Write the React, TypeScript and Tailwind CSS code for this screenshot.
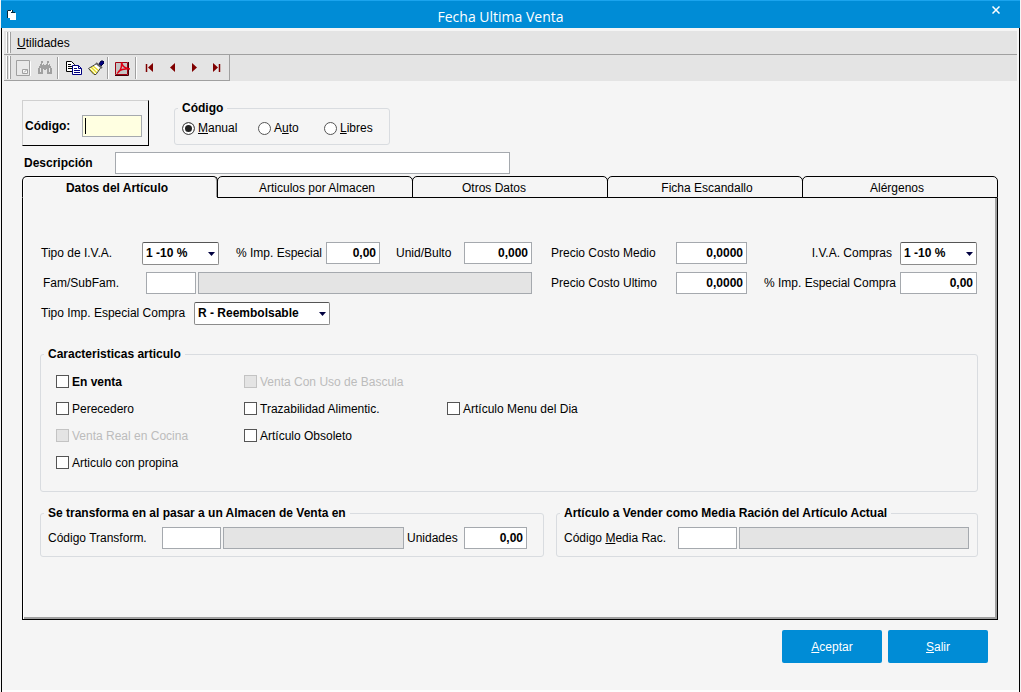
import { useState, type ReactNode } from "react";
import clsx from "clsx";

const TABS = [
  { name: "Datos del Artículo", pad: "pr-1.5" },
  { name: "Articulos por Almacen", pad: "pl-1" },
  { name: "Otros Datos", pad: "pr-8" },
  { name: "Ficha Escandallo", pad: "pl-1" },
  { name: "Alérgenos", pad: "pr-1.5" },
];

const CODE_MODES = [
  { id: "manual", key: "M", before: "", after: "anual", width: "w-[76px]" },
  { id: "auto", key: "u", before: "A", after: "to", width: "w-[66px]" },
  { id: "libres", key: "L", before: "", after: "ibres", width: "" },
];

interface TextFieldProps {
  id: string;
  label?: string;
  value?: string;
  readOnly?: boolean;
  className?: string;
}

function TextField({ id, label, value = "", readOnly, className }: TextFieldProps) {
  return (
    <input
      id={id}
      type="text"
      aria-label={label}
      defaultValue={value}
      readOnly={readOnly}
      className={clsx(
        "h-[22px] min-w-0 border border-[#a5a9ae] px-[3px] text-right font-bold outline-none",
        readOnly ? "bg-[#e4e4e4]" : "bg-white",
        className
      )}
    />
  );
}

interface SelectFieldProps {
  id: string;
  options: string[];
  className?: string;
}

function SelectField({ id, options, className }: SelectFieldProps) {
  return (
    <div className={clsx("relative shrink-0", className)}>
      <select
        id={id}
        className="block h-[23px] w-full appearance-none rounded-[2px] border border-[#8c8c8c] border-t-[#555] bg-white pl-[3px] font-bold outline-none"
      >
        {options.map((o) => (
          <option key={o}>{o}</option>
        ))}
      </select>
      <svg className="pointer-events-none absolute top-[10px] right-1 h-1 w-[7px]" viewBox="0 0 7 4" fill="#000040">
        <path d="M0 0h7L3.5 4z" />
      </svg>
    </div>
  );
}

interface GroupProps {
  title: string;
  className?: string;
  children: ReactNode;
}

function Group({ title, className, children }: GroupProps) {
  return (
    <fieldset className={clsx("min-w-0 rounded-[3px] border border-[#d9dce0] pl-[3px]", className)}>
      <legend className="px-1 leading-4 font-bold">{title}</legend>
      {children}
    </fieldset>
  );
}

interface CheckProps {
  label: string;
  bold?: boolean;
  disabled?: boolean;
}

function Check({ label, bold, disabled }: CheckProps) {
  return (
    <label className={clsx("flex h-[27px] items-center gap-[3px]", bold && "font-bold", disabled && "text-[#bcbcbc]")}>
      <input
        type="checkbox"
        disabled={disabled}
        className="size-[13px] appearance-none border border-[#555] bg-white checked:bg-[#444] disabled:border-[#c3c3c3] disabled:bg-[#e4e4e4]"
      />
      {label}
    </label>
  );
}

function Grip() {
  return (
    <span className="flex gap-px self-stretch py-px pl-0.5">
      <span className="w-0.5 border-r border-[#a0a0a0] bg-white" />
      <span className="w-0.5 border-r border-[#a0a0a0] bg-white" />
    </span>
  );
}

function Separator() {
  return <span className="h-[22px] w-0.5 border-l border-[#a0a0a0] bg-white" />;
}

interface ToolButtonProps {
  title: string;
  disabled?: boolean;
  children: ReactNode;
}

function ToolButton({ title, disabled, children }: ToolButtonProps) {
  return (
    <button title={title} disabled={disabled} className="flex h-[22px] w-[22px] items-center justify-center">
      <svg className="size-4" viewBox="0 0 16 16" fill="none">
        {children}
      </svg>
    </button>
  );
}

export default function App() {
  const [mode, setMode] = useState("manual");
  const [tab, setTab] = useState(0);

  return (
    <div className="flex min-h-screen flex-col bg-[#f5f5f5] px-px font-['Liberation_Sans',Arial,sans-serif] text-xs text-black">
      <header className="relative flex h-7 items-center justify-center border-t border-[#1ba4ee] bg-[#008cd6] pt-1 pr-5">
        <svg className="absolute top-2 left-1.5 h-3 w-3" viewBox="0 0 12 12">
          <path d="M0 1h5v8H0z" fill="#fff" />
          <path d="M3 4h6v7H3z" fill="#fff" />
          <path d="M.5 9V1.500H4M5.500 1v2.500H8" fill="none" stroke="#05293d" />
          <path d="M4 3h2v1H4z" fill="#05293d" />
        </svg>
        <h1 className="font-['Open_Sans','Noto_Sans',sans-serif] text-sm text-white">Fecha Ultima Venta</h1>
        <button title="Cerrar" className="absolute top-[3px] right-[18px] p-0.5">
          <svg className="size-2" viewBox="0 0 8 8" stroke="#fff" strokeWidth="1.500">
            <path d="M.5 .5l7 7M7.500 .5l-7 7" />
          </svg>
        </button>
      </header>

      <div className="flex flex-1 flex-col border-x border-black">
        <nav className="mx-0.5 mt-[3px] flex h-6 items-center border-b border-[#a0a0a0] bg-[#e4e4e4]">
          <Grip />
          <button className="px-1.5">
            <span className="underline">U</span>tilidades
          </button>
        </nav>

        <div className="mx-0.5 flex h-[26px] bg-[#e4e4e4]">
          <div className="flex items-center border-r border-b border-[#a0a0a0] pr-0.5">
            <Grip />
            <span className="w-px" />
            <ToolButton title="Nuevo" disabled>
              <path d="M2.500 1.500h13v15h-13z" stroke="#fff" />
              <path d="M1.500 .5h13v15h-13z" fill="#e9e9e9" stroke="#a0a0a0" />
              <path d="M7.500 9.500h5v4h-5z" fill="#f8f8f8" stroke="#a0a0a0" />
              <path d="M9 12.500l3-3" stroke="#a0a0a0" />
            </ToolButton>
            <ToolButton title="Buscar" disabled>
              <path
                d="M4 1h2v3h1v1h2V4h1V1h2v3h1v2h1v2h1v6h-5V9H9v1H7V9H6v5H1V8h1V6h1V4h1z"
                fill="#a0a0a0"
              />
              <path d="M5.500 3v2M3.500 8v4M11.500 3v2M12.500 8v4" stroke="#e8e8e8" />
            </ToolButton>
            <span className="w-px" />
            <Separator />
            <span className="w-1" />
            <ToolButton title="Copiar">
              <path d="M.5 1.500h5l3 3v7h-8z" fill="#fff" stroke="#000" />
              <path d="M2 4.500h3M2 6.500h4M2 8.500h4" stroke="#000" />
              <path d="M6.500 5.500h6l3 3v6h-9z" fill="#fff" stroke="#000080" />
              <path d="M12.500 5.500v3h3M8 8.500h3M8 10.500h6M8 12.500h6" stroke="#000080" />
            </ToolButton>
            <ToolButton title="Limpiar">
              <path d="M11 4l2-3h2l1 1v1l-3 3z" fill="#000080" stroke="#000040" />
              <path d="M.5 8.500L9 3l4 4-5 8H6z" fill="#fff" />
              <path d="M3 7l6 6M5 6l6 5M1.500 9l5 5" stroke="#e8dc20" strokeWidth="1.500" />
              <path d="M.5 8.500L8 4M12.500 8L8 14.500H6L.5 8.500" stroke="#444" />
              <path d="M8 3l6 5" stroke="#606060" strokeWidth="2" />
            </ToolButton>
            <Separator />
            <span className="w-0.5" />
            <ToolButton title="Exportar a PDF">
              <path d="M1.500 2.500h12v12h-12z" fill="#c4c4c4" stroke="#a00010" />
              <path d="M1 15.500h13.500V2" stroke="#400008" />
              <path d="M3 13.500c3-2 5-6 4.500-11 1 4 3 6 8.500 6.500-5-.5-9 .5-12 2.500" stroke="#e00014" strokeWidth="1.500" />
            </ToolButton>
            <span className="w-0.5" />
            <Separator />
            <span className="w-0.5" />
            <ToolButton title="Primero">
              <path d="M4.500 4v8" stroke="#800000" strokeWidth="1.500" />
              <path d="M11 3v9L6 7.500z" fill="#800000" />
            </ToolButton>
            <ToolButton title="Anterior">
              <path d="M11 3v9L6 7.500z" fill="#800000" />
            </ToolButton>
            <ToolButton title="Siguiente">
              <path d="M6 3v9l5-4.500z" fill="#800000" />
            </ToolButton>
            <ToolButton title="Último">
              <path d="M11.500 4v8" stroke="#800000" strokeWidth="1.500" />
              <path d="M5 3v9l5-4.500z" fill="#800000" />
            </ToolButton>
          </div>
        </div>

        <main className="flex flex-1 flex-col border-b-2 border-[#fdfdfd] pt-[19px] pr-[21px] pl-5">
          <div className="flex items-start gap-[25px]">
            <div className="flex h-[46px] w-[127px] items-center justify-between border border-t-[#d0d0d0] border-r-black border-b-black border-l-[#d0d0d0] pt-1.5 pr-1.5 pl-0.5">
              <label htmlFor="codigo" className="font-bold">
                Código:
              </label>
              <div className="relative">
                <input
                  id="codigo"
                  type="text"
                  className="peer block h-[22px] w-[60px] border border-[#a5a9ae] bg-[#ffffe1] px-[3px] outline-none"
                />
                <span className="pointer-events-none absolute top-[3px] left-[3px] h-4 w-px bg-black peer-focus:hidden" />
              </div>
            </div>

            <Group title="Código" className="h-[45px] w-[216px]">
              <div className="flex pt-1 pl-1">
                {CODE_MODES.map((m) => (
                  <label key={m.id} className={clsx("flex items-center gap-[3px]", m.width)}>
                    <input
                      type="radio"
                      name="modo"
                      checked={mode === m.id}
                      onChange={() => setMode(m.id)}
                      className="size-[13px] appearance-none rounded-full border border-[#555] bg-white checked:bg-[#222] checked:shadow-[inset_0_0_0_2px_#fff]"
                    />
                    <span>
                      {m.before}
                      <span className="underline">{m.key}</span>
                      {m.after}
                    </span>
                  </label>
                ))}
              </div>
            </Group>
          </div>

          <div className="mt-1.5 flex items-center pl-0.5">
            <label htmlFor="descripcion" className="w-[91px] font-bold">
              Descripción
            </label>
            <TextField id="descripcion" className="w-[395px] text-left" />
          </div>

          <div role="tablist" className="mt-0.5 flex">
            {TABS.map((t, i) => (
              <button
                key={t.name}
                role="tab"
                aria-selected={tab === i}
                onClick={() => setTab(i)}
                className={clsx(
                  "h-[22px] flex-1 rounded-t-[5px] border border-black pt-0.5 not-first:-ml-px",
                  tab === i && "border-b-transparent font-bold shadow-[inset_1px_1px_0_#fff,inset_-1px_0_0_#a0a0a0]"
                )}
              >
                <span className={t.pad}>{t.name}</span>
              </button>
            ))}
          </div>

          <section className="flex h-[422px] flex-col border border-t-0 border-black pt-[43px] pr-[19px] pl-[17px] shadow-[inset_1px_0_0_#fff,inset_-2px_-2px_0_#a0a0a0]">
            <div className="grid grid-cols-[1fr_196px_213px] gap-x-[17px] gap-y-[7px] px-px">
              <div className="flex h-6 items-center pr-0.5">
                <label htmlFor="iva" className="w-[101px]">
                  Tipo de I.V.A.
                </label>
                <SelectField id="iva" options={["1 -10 %", "2 -21 %", "3 -4 %"]} className="w-[77px]" />
                <label htmlFor="impEspecial" className="ml-auto pr-1">
                  % Imp. Especial
                </label>
                <TextField id="impEspecial" value="0,00" className="w-[54px]" />
                <label htmlFor="bulto" className="w-[84px] pl-4">
                  Unid/Bulto
                </label>
                <TextField id="bulto" value="0,000" className="w-[68px]" />
              </div>
              <div className="flex items-center justify-between">
                <label htmlFor="costoMedio">Precio Costo Medio</label>
                <TextField id="costoMedio" value="0,0000" className="w-[71px]" />
              </div>
              <div className="flex items-center justify-end">
                <label htmlFor="ivaCompras" className="pr-2">
                  I.V.A. Compras
                </label>
                <SelectField id="ivaCompras" options={["1 -10 %", "2 -21 %", "3 -4 %"]} className="w-[77px]" />
              </div>

              <div className="flex items-center gap-0.5">
                <label htmlFor="familia" className="w-[103px] pl-0.5">
                  Fam/SubFam.
                </label>
                <TextField id="familia" className="w-[50px]" />
                <TextField id="familiaNombre" label="Nombre de familia" readOnly className="flex-1" />
                <span />
              </div>
              <div className="flex items-center justify-between">
                <label htmlFor="costoUltimo">Precio Costo Ultimo</label>
                <TextField id="costoUltimo" value="0,0000" className="w-[71px]" />
              </div>
              <div className="flex items-center justify-between">
                <label htmlFor="impCompra">% Imp. Especial Compra</label>
                <TextField id="impCompra" value="0,00" className="w-[77px]" />
              </div>

              <div className="flex h-6 items-center">
                <label htmlFor="tipoImp" className="w-[153px]">
                  Tipo Imp. Especial Compra
                </label>
                <SelectField id="tipoImp" options={["R - Reembolsable", "N - No Reembolsable"]} className="w-[136px]" />
              </div>
            </div>

            <Group title="Caracteristicas articulo" className="mt-[21px]">
              <div className="grid grid-cols-[188px_203px_1fr] pt-1.5 pb-[15px] pl-3">
                <Check label="En venta" bold />
                <Check label="Venta Con Uso de Bascula" disabled />
                <span />
                <Check label="Perecedero" />
                <Check label="Trazabilidad Alimentic." />
                <Check label="Artículo Menu del Dia" />
                <Check label="Venta Real en Cocina" disabled />
                <Check label="Artículo Obsoleto" />
                <span />
                <Check label="Articulo con propina" />
              </div>
            </Group>

            <div className="mt-[13px] grid grid-cols-[504fr_422fr] gap-3">
              <Group title="Se transforma en al pasar a un Almacen de Venta en">
                <div className="flex items-center gap-0.5 pt-1.5 pr-4 pb-[7px] pl-1">
                  <label htmlFor="transform" className="w-28">
                    Código Transform.
                  </label>
                  <TextField id="transform" className="w-[59px]" />
                  <TextField id="transformNombre" label="Artículo transformado" readOnly className="flex-1" />
                  <label htmlFor="unidades" className="w-14 pl-px">
                    Unidades
                  </label>
                  <TextField id="unidades" value="0,00" className="w-[63px]" />
                </div>
              </Group>
              <Group title="Artículo a Vender como Media Ración del Artículo Actual">
                <div className="flex items-center gap-0.5 pt-1.5 pr-2 pb-[7px] pl-1">
                  <label htmlFor="media" className="w-28">
                    Código <span className="underline">M</span>edia Rac.
                  </label>
                  <TextField id="media" className="w-[59px]" />
                  <TextField id="mediaNombre" label="Artículo media ración" readOnly className="flex-1" />
                </div>
              </Group>
            </div>
          </section>

          <div className="mt-2.5 flex justify-end gap-1.5 pr-2.5 text-white">
            <button className="h-[33px] w-[100px] rounded-[2px] bg-[#008cd6]">
              <span className="underline">A</span>ceptar
            </button>
            <button className="h-[33px] w-[100px] rounded-[2px] bg-[#008cd6]">
              <span className="underline">S</span>alir
            </button>
          </div>
        </main>
      </div>
    </div>
  );
}
